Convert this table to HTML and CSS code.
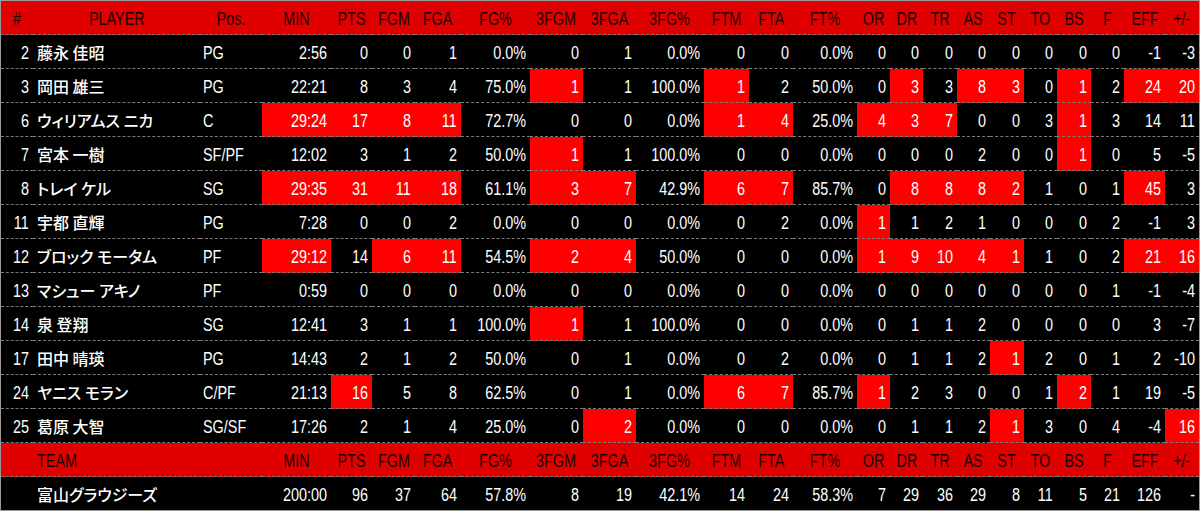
FILE: index.html
```html
<!DOCTYPE html>
<html lang="ja">
<head>
<meta charset="utf-8">
<title>Box Score</title>
<link rel="stylesheet" href="styles.css">
</head>
<body>
<div class="box">
<table class="stats">
<colgroup>
<col class="w-no"><col class="w-name"><col class="w-pos"><col class="w-min"><col class="w-pts"><col class="w-fgm"><col class="w-fga"><col class="w-fgp"><col class="w-3m"><col class="w-3a"><col class="w-3p"><col class="w-ftm"><col class="w-fta"><col class="w-ftp"><col class="w-s"><col class="w-s"><col class="w-s1"><col class="w-s"><col class="w-s1"><col class="w-s"><col class="w-s1"><col class="w-s"><col class="w-eff"><col class="w-pm">
</colgroup>
<thead>
<tr class="head"><th class="hno"><span>#</span></th><th><span>PLAYER</span></th><th><span>Pos.</span></th><th><span>MIN</span></th><th><span>PTS</span></th><th><span>FGM</span></th><th><span>FGA</span></th><th><span>FG%</span></th><th><span>3FGM</span></th><th><span>3FGA</span></th><th><span>3FG%</span></th><th><span>FTM</span></th><th><span>FTA</span></th><th><span>FT%</span></th><th><span>OR</span></th><th><span>DR</span></th><th><span>TR</span></th><th><span>AS</span></th><th><span>ST</span></th><th><span>TO</span></th><th><span>BS</span></th><th><span>F</span></th><th><span>EFF</span></th><th><span>+/-</span></th></tr>
</thead>
<tbody>
<tr><td><span>2</span></td><td class="name">藤永 佳昭</td><td class="pos"><span>PG</span></td><td><span>2:56</span></td><td><span>0</span></td><td><span>0</span></td><td><span>1</span></td><td><span>0.0%</span></td><td><span>0</span></td><td><span>1</span></td><td><span>0.0%</span></td><td><span>0</span></td><td><span>0</span></td><td><span>0.0%</span></td><td><span>0</span></td><td><span>0</span></td><td><span>0</span></td><td><span>0</span></td><td><span>0</span></td><td><span>0</span></td><td><span>0</span></td><td><span>0</span></td><td><span>-1</span></td><td><span>-3</span></td></tr>
<tr><td><span>3</span></td><td class="name">岡田 雄三</td><td class="pos"><span>PG</span></td><td><span>22:21</span></td><td><span>8</span></td><td><span>3</span></td><td><span>4</span></td><td><span>75.0%</span></td><td class="hi"><span>1</span></td><td><span>1</span></td><td><span>100.0%</span></td><td class="hi"><span>1</span></td><td><span>2</span></td><td><span>50.0%</span></td><td><span>0</span></td><td class="hi"><span>3</span></td><td><span>3</span></td><td class="hi"><span>8</span></td><td class="hi"><span>3</span></td><td><span>0</span></td><td class="hi"><span>1</span></td><td><span>2</span></td><td class="hi"><span>24</span></td><td class="hi"><span>20</span></td></tr>
<tr><td><span>6</span></td><td class="name">ウィリアムス ニカ</td><td class="pos"><span>C</span></td><td class="hi"><span>29:24</span></td><td class="hi"><span>17</span></td><td class="hi"><span>8</span></td><td class="hi"><span>11</span></td><td><span>72.7%</span></td><td><span>0</span></td><td><span>0</span></td><td><span>0.0%</span></td><td class="hi"><span>1</span></td><td class="hi"><span>4</span></td><td><span>25.0%</span></td><td class="hi"><span>4</span></td><td class="hi"><span>3</span></td><td class="hi"><span>7</span></td><td><span>0</span></td><td><span>0</span></td><td><span>3</span></td><td class="hi"><span>1</span></td><td><span>3</span></td><td><span>14</span></td><td><span>11</span></td></tr>
<tr><td><span>7</span></td><td class="name">宮本 一樹</td><td class="pos"><span>SF/PF</span></td><td><span>12:02</span></td><td><span>3</span></td><td><span>1</span></td><td><span>2</span></td><td><span>50.0%</span></td><td class="hi"><span>1</span></td><td><span>1</span></td><td><span>100.0%</span></td><td><span>0</span></td><td><span>0</span></td><td><span>0.0%</span></td><td><span>0</span></td><td><span>0</span></td><td><span>0</span></td><td><span>2</span></td><td><span>0</span></td><td><span>0</span></td><td class="hi"><span>1</span></td><td><span>0</span></td><td><span>5</span></td><td><span>-5</span></td></tr>
<tr><td><span>8</span></td><td class="name">トレイ ケル</td><td class="pos"><span>SG</span></td><td class="hi"><span>29:35</span></td><td class="hi"><span>31</span></td><td class="hi"><span>11</span></td><td class="hi"><span>18</span></td><td><span>61.1%</span></td><td class="hi"><span>3</span></td><td class="hi"><span>7</span></td><td><span>42.9%</span></td><td class="hi"><span>6</span></td><td class="hi"><span>7</span></td><td><span>85.7%</span></td><td><span>0</span></td><td class="hi"><span>8</span></td><td class="hi"><span>8</span></td><td class="hi"><span>8</span></td><td class="hi"><span>2</span></td><td><span>1</span></td><td><span>0</span></td><td><span>1</span></td><td class="hi"><span>45</span></td><td><span>3</span></td></tr>
<tr><td><span>11</span></td><td class="name">宇都 直輝</td><td class="pos"><span>PG</span></td><td><span>7:28</span></td><td><span>0</span></td><td><span>0</span></td><td><span>2</span></td><td><span>0.0%</span></td><td><span>0</span></td><td><span>0</span></td><td><span>0.0%</span></td><td><span>0</span></td><td><span>2</span></td><td><span>0.0%</span></td><td class="hi"><span>1</span></td><td><span>1</span></td><td><span>2</span></td><td><span>1</span></td><td><span>0</span></td><td><span>0</span></td><td><span>0</span></td><td><span>2</span></td><td><span>-1</span></td><td><span>3</span></td></tr>
<tr><td><span>12</span></td><td class="name">ブロック モータム</td><td class="pos"><span>PF</span></td><td class="hi"><span>29:12</span></td><td><span>14</span></td><td class="hi"><span>6</span></td><td class="hi"><span>11</span></td><td><span>54.5%</span></td><td class="hi"><span>2</span></td><td class="hi"><span>4</span></td><td><span>50.0%</span></td><td><span>0</span></td><td><span>0</span></td><td><span>0.0%</span></td><td class="hi"><span>1</span></td><td class="hi"><span>9</span></td><td class="hi"><span>10</span></td><td class="hi"><span>4</span></td><td class="hi"><span>1</span></td><td><span>1</span></td><td><span>0</span></td><td><span>2</span></td><td class="hi"><span>21</span></td><td class="hi"><span>16</span></td></tr>
<tr><td><span>13</span></td><td class="name">マシュー アキノ</td><td class="pos"><span>PF</span></td><td><span>0:59</span></td><td><span>0</span></td><td><span>0</span></td><td><span>0</span></td><td><span>0.0%</span></td><td><span>0</span></td><td><span>0</span></td><td><span>0.0%</span></td><td><span>0</span></td><td><span>0</span></td><td><span>0.0%</span></td><td><span>0</span></td><td><span>0</span></td><td><span>0</span></td><td><span>0</span></td><td><span>0</span></td><td><span>0</span></td><td><span>0</span></td><td><span>1</span></td><td><span>-1</span></td><td><span>-4</span></td></tr>
<tr><td><span>14</span></td><td class="name">泉 登翔</td><td class="pos"><span>SG</span></td><td><span>12:41</span></td><td><span>3</span></td><td><span>1</span></td><td><span>1</span></td><td><span>100.0%</span></td><td class="hi"><span>1</span></td><td><span>1</span></td><td><span>100.0%</span></td><td><span>0</span></td><td><span>0</span></td><td><span>0.0%</span></td><td><span>0</span></td><td><span>1</span></td><td><span>1</span></td><td><span>2</span></td><td><span>0</span></td><td><span>0</span></td><td><span>0</span></td><td><span>0</span></td><td><span>3</span></td><td><span>-7</span></td></tr>
<tr><td><span>17</span></td><td class="name">田中 晴瑛</td><td class="pos"><span>PG</span></td><td><span>14:43</span></td><td><span>2</span></td><td><span>1</span></td><td><span>2</span></td><td><span>50.0%</span></td><td><span>0</span></td><td><span>1</span></td><td><span>0.0%</span></td><td><span>0</span></td><td><span>2</span></td><td><span>0.0%</span></td><td><span>0</span></td><td><span>1</span></td><td><span>1</span></td><td><span>2</span></td><td class="hi"><span>1</span></td><td><span>2</span></td><td><span>0</span></td><td><span>1</span></td><td><span>2</span></td><td><span>-10</span></td></tr>
<tr><td><span>24</span></td><td class="name">ヤニス モラン</td><td class="pos"><span>C/PF</span></td><td><span>21:13</span></td><td class="hi"><span>16</span></td><td><span>5</span></td><td><span>8</span></td><td><span>62.5%</span></td><td><span>0</span></td><td><span>1</span></td><td><span>0.0%</span></td><td class="hi"><span>6</span></td><td class="hi"><span>7</span></td><td><span>85.7%</span></td><td class="hi"><span>1</span></td><td><span>2</span></td><td><span>3</span></td><td><span>0</span></td><td><span>0</span></td><td><span>1</span></td><td class="hi"><span>2</span></td><td><span>1</span></td><td><span>19</span></td><td><span>-5</span></td></tr>
<tr><td><span>25</span></td><td class="name">葛原 大智</td><td class="pos"><span>SG/SF</span></td><td><span>17:26</span></td><td><span>2</span></td><td><span>1</span></td><td><span>4</span></td><td><span>25.0%</span></td><td><span>0</span></td><td class="hi"><span>2</span></td><td><span>0.0%</span></td><td><span>0</span></td><td><span>0</span></td><td><span>0.0%</span></td><td><span>0</span></td><td><span>1</span></td><td><span>1</span></td><td><span>2</span></td><td class="hi"><span>1</span></td><td><span>3</span></td><td><span>0</span></td><td><span>4</span></td><td><span>-4</span></td><td class="hi"><span>16</span></td></tr>
<tr class="head"><th></th><th class="team-h" colspan="2"><span>TEAM</span></th><th><span>MIN</span></th><th><span>PTS</span></th><th><span>FGM</span></th><th><span>FGA</span></th><th><span>FG%</span></th><th><span>3FGM</span></th><th><span>3FGA</span></th><th><span>3FG%</span></th><th><span>FTM</span></th><th><span>FTA</span></th><th><span>FT%</span></th><th><span>OR</span></th><th><span>DR</span></th><th><span>TR</span></th><th><span>AS</span></th><th><span>ST</span></th><th><span>TO</span></th><th><span>BS</span></th><th><span>F</span></th><th><span>EFF</span></th><th><span>+/-</span></th></tr>
<tr class="last"><td></td><td class="name" colspan="2">富山グラウジーズ</td><td><span>200:00</span></td><td><span>96</span></td><td><span>37</span></td><td><span>64</span></td><td><span>57.8%</span></td><td><span>8</span></td><td><span>19</span></td><td><span>42.1%</span></td><td><span>14</span></td><td><span>24</span></td><td><span>58.3%</span></td><td><span>7</span></td><td><span>29</span></td><td><span>36</span></td><td><span>29</span></td><td><span>8</span></td><td><span>11</span></td><td><span>5</span></td><td><span>21</span></td><td><span>126</span></td><td><span>-</span></td></tr>
</tbody>
</table>
</div>
</body>
</html>
```
FILE: styles.css
```css
html, body {
  margin: 0;
  padding: 0;
  background: #000;
}
.box {
  width: 1200px;
  height: 511px;
  box-sizing: border-box;
  border: 1px solid #9a9a9a;
  background: #000;
  overflow: hidden;
}
.stats {
  width: 1198px;
  table-layout: fixed;
  border-collapse: separate;
  border-spacing: 0;
  font-family: "Liberation Sans", "Noto Sans CJK JP", sans-serif;
  font-size: 18px;
  color: #fff;
}
.w-no { width: 32px; }
.w-name { width: 167px; }
.w-pos { width: 62px; }
.w-min { width: 69px; }
.w-pts { width: 41px; }
.w-fgm { width: 43px; }
.w-fga { width: 46px; }
.w-fgp { width: 69px; }
.w-3m { width: 53px; }
.w-3a { width: 53px; }
.w-3p { width: 68px; }
.w-ftm { width: 45px; }
.w-fta { width: 44px; }
.w-ftp { width: 64px; }
.w-s { width: 33px; }
.w-s1 { width: 34px; }
.w-eff { width: 41px; }
.w-pm { width: 34px; }
.stats td, .stats th {
  height: 33px;
  padding: 0 4px 0 0;
  border-bottom: 1px dashed #7a7a7a;
  white-space: nowrap;
  overflow: visible;
  vertical-align: middle;
  line-height: 20px;
}
.stats td span, .stats th span {
  display: inline-block;
  transform: scaleX(0.8);
  transform-origin: right center;
  position: relative;
  top: 1px;
}
.stats td {
  text-align: right;
}
.stats th {
  font-weight: normal;
  text-align: center;
  padding: 0;
  color: #1c0000;
}
.stats th span {
  transform-origin: center center;
}
.head th {
  background: #e00000;
}
.stats .hno {
  text-align: left;
  padding-left: 12px;
}
.stats .hno span,
.stats .team-h span,
.stats td.pos span {
  transform-origin: left center;
}
.stats .team-h {
  text-align: left;
  padding-left: 4px;
}
.stats td.name {
  text-align: left;
  padding-left: 4px;
  font-family: "Noto Sans CJK JP", sans-serif;
  font-size: 16px;
  font-weight: 500;
  font-feature-settings: "palt";
}
.stats td.pos {
  text-align: left;
  padding-left: 3px;
}
.stats td.hi {
  background: #ff0000;
}
.last td {
  border-bottom: none;
}
```
